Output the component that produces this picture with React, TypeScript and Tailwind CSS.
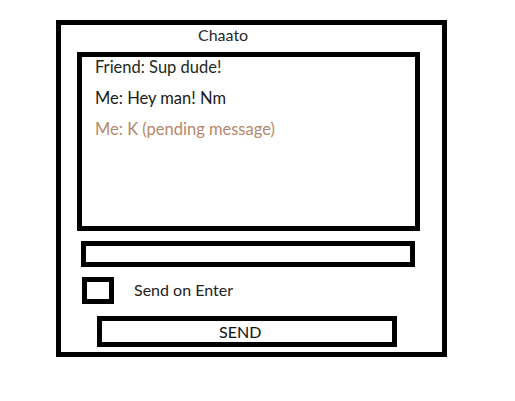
import React from "react";

export default function App() {
  return (
    <div className="w-[515px] h-[401px] bg-white" style={{ fontFamily: "Lato, 'Open Sans', sans-serif" }}>
      <div className="ml-[56px] pt-[20px]">
        <div className="w-[391px] h-[337px] border-[5px] border-black flex flex-col">
          <div className="h-[27px] pl-[137px] text-[16px] leading-[20px] text-[#2a2a2a]">Chaato</div>
          <div className="ml-[16px] w-[343px] h-[179px] border-[5px] border-black pl-[13px] text-[16.5px] leading-[20px] flex flex-col">
            <div className="text-[#1c2a1c]">Friend: Sup dude!</div>
            <div className="mt-[11px] text-[#1a1a1a]">Me: Hey man! Nm</div>
            <div className="mt-[11px] text-[#b5876d]">Me: K (pending message)</div>
          </div>
          <div className="ml-[20px] mt-[10px] w-[334px] h-[26px] border-[5px] border-black" />
          <div className="mt-[10px] ml-[21px] flex items-center h-[27px]">
            <div className="w-[32px] h-[27px] border-[5px] border-black" />
            <span className="ml-[20px] -mt-[2px] text-[16px] leading-[20px] text-[#222]">Send on Enter</span>
          </div>
          <div className="ml-[36px] mt-[12px] w-[300px] h-[31px] border-[5px] border-black flex items-center pl-[117px] text-[16px] leading-[20px] text-[#111]">
            SEND
          </div>
        </div>
      </div>
    </div>
  );
}
